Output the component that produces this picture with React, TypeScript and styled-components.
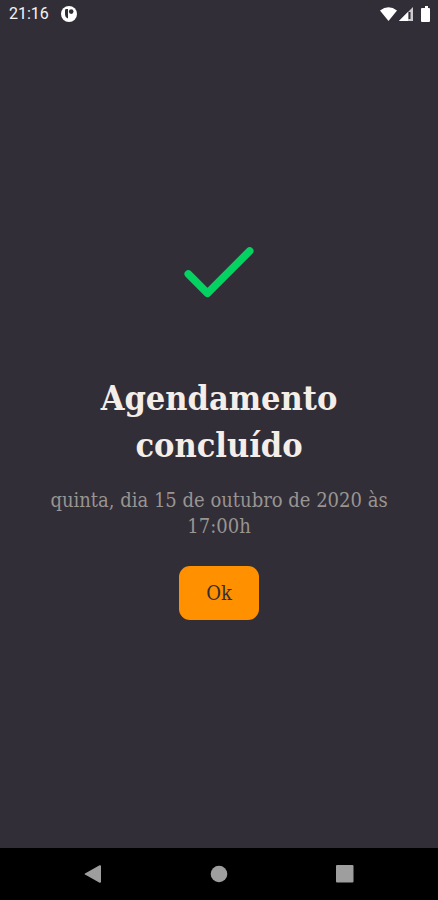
import React from "react";
import styled, { createGlobalStyle } from "styled-components";

const slab = `"Roboto Slab", "DejaVu Serif Condensed", "DejaVu Serif", serif`;

const GlobalStyle = createGlobalStyle`
  *, *::before, *::after { box-sizing: border-box; }
  body { margin: 0; background: #312e38; }
`;

const Screen = styled.div`
  min-height: 100vh;
  display: flex;
  flex-direction: column;
  background: #312e38;
`;

const StatusBar = styled.header`
  height: 28px;
  padding: 0 8px 0 9px;
  display: flex;
  align-items: center;
  justify-content: space-between;
  color: #f4f4f5;
  font: 400 16px/28px Roboto, sans-serif;
`;

const StatusGroup = styled.div<{ $gap: number }>`
  display: flex;
  align-items: center;
  gap: ${({ $gap }) => $gap}px;
`;

const Content = styled.main`
  flex: 1;
  display: flex;
  flex-direction: column;
  align-items: center;
  justify-content: center;
  padding: 0 24px 28px;
  text-align: center;
  font-family: ${slab};
`;

const Title = styled.h1`
  max-width: 300px;
  margin: 55px 0 0;
  color: #f4ede8;
  font-size: 34px;
  font-weight: 700;
  line-height: 47px;
`;

const Description = styled.p`
  max-width: 350px;
  margin: 18px 0 0;
  color: #999591;
  font-size: 20px;
  line-height: 26px;
`;

const OkButton = styled.button`
  margin-top: 27px;
  padding: 14px 27px;
  border: 0;
  border-radius: 11px;
  background: #ff9000;
  color: #312e38;
  font-family: inherit;
  font-size: 20px;
  line-height: 26px;
  cursor: pointer;
`;

const NavigationBar = styled.nav`
  height: 52px;
  display: flex;
  align-items: center;
  justify-content: center;
  gap: 98px;
  background: #000;
`;

const NavButton = styled.button`
  width: 28px;
  height: 28px;
  padding: 0;
  border: 0;
  display: grid;
  place-items: center;
  background: none;
  color: #9e9e9e;
  cursor: pointer;
`;

export default function App() {
  return (
    <>
      <GlobalStyle />
      <Screen>
        <StatusBar>
          <StatusGroup $gap={12}>
            <time>21:16</time>
            <svg width="16" height="16" viewBox="0 0 16 16" aria-hidden="true">
              <circle cx="8" cy="8" r="8" fill="#fff" />
              <path d="M4 4.2q0-1.2 1.2-1.2H7v9.5q-3-1-3-4.5Z" fill="#312e38" />
              <circle cx="10.2" cy="5.6" r="2.3" fill="#312e38" />
            </svg>
          </StatusGroup>
          <StatusGroup $gap={2}>
            <svg width="17" height="14" viewBox="0 0 17 14" aria-hidden="true">
              <path d="M0 3.5Q8.5-3 17 3.5L8.5 14Z" fill="#fff" />
            </svg>
            <svg width="14" height="14" viewBox="0 0 14 14" aria-hidden="true">
              <path d="M0 14 14 0v14Z" fill="#fff" fillOpacity=".75" />
              <path d="M0 14 9 5v9Z" fill="#fff" />
              <path d="M10.5 5v7" stroke="#312e38" strokeWidth="2" />
            </svg>
            <svg width="15" height="16" viewBox="0 0 15 16" aria-hidden="true">
              <path d="M8 2h2V0h3v2h1q1 0 1 1v12q0 1-1 1H7q-1 0-1-1V3q0-1 1-1Z" fill="#fff" />
            </svg>
          </StatusGroup>
        </StatusBar>

        <Content>
          <svg
            width="92"
            height="92"
            viewBox="0 0 24 24"
            fill="none"
            stroke="#04d361"
            strokeWidth="2"
            strokeLinecap="round"
            strokeLinejoin="round"
            aria-hidden="true"
          >
            <path d="M20 6 9 17l-5-5" />
          </svg>
          <Title>Agendamento concluído</Title>
          <Description>quinta, dia 15 de outubro de 2020 às 17:00h</Description>
          <OkButton type="button">Ok</OkButton>
        </Content>

        <NavigationBar aria-label="Sistema">
          <NavButton type="button" aria-label="Voltar">
            <svg width="18" height="18" viewBox="0 0 18 18" fill="currentColor">
              <path d="M1 8.4 15.6.2Q17 0 17 1v16q0 1-1.4.8L1 9.6Q0 9 1 8.4Z" />
            </svg>
          </NavButton>
          <NavButton type="button" aria-label="Início">
            <svg width="18" height="18" viewBox="0 0 18 18" fill="currentColor">
              <circle cx="9" cy="9" r="8.3" />
            </svg>
          </NavButton>
          <NavButton type="button" aria-label="Recentes">
            <svg width="18" height="18" viewBox="0 0 18 18" fill="currentColor">
              <rect width="17.5" height="17.5" rx="1" />
            </svg>
          </NavButton>
        </NavigationBar>
      </Screen>
    </>
  );
}
